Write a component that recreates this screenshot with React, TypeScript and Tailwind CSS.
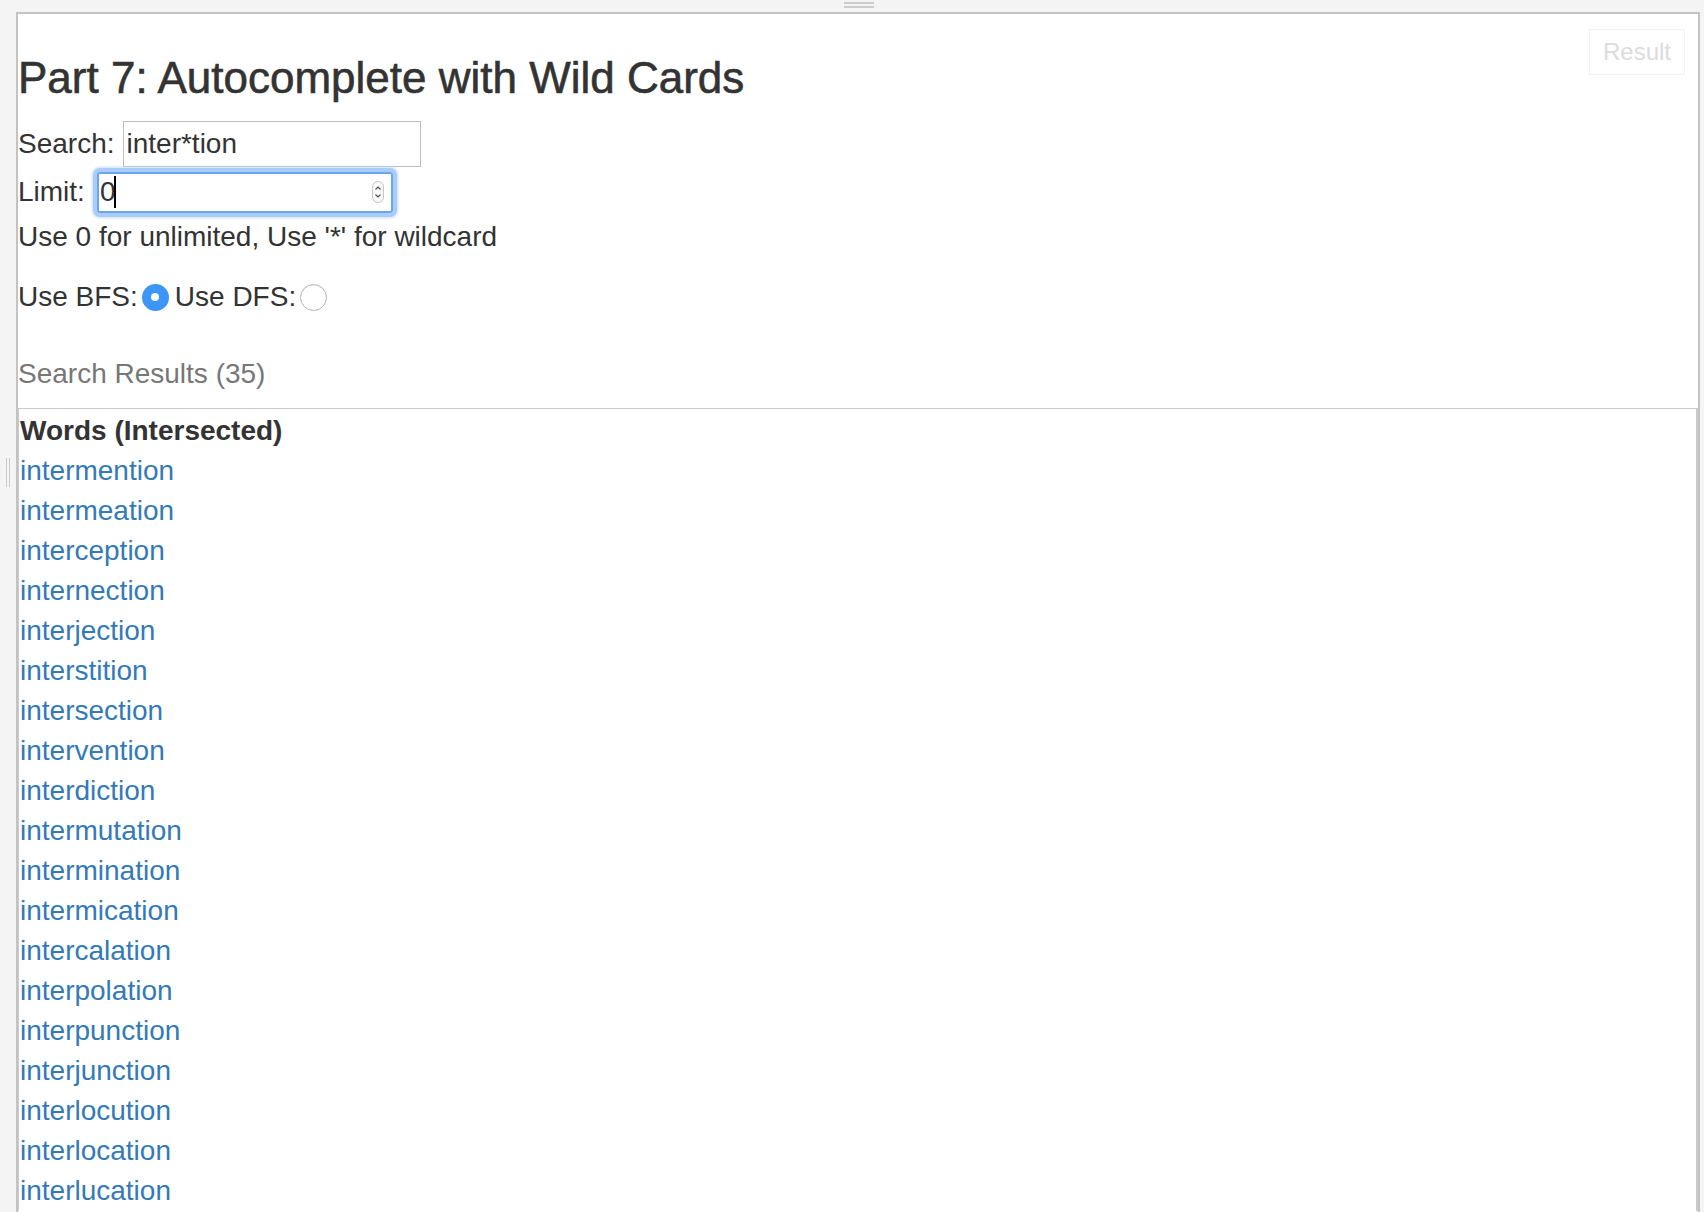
import React from 'react';

// only the rows that fit on screen; the rest of the 35 are below the fold
const words = [
  'intermention',
  'intermeation',
  'interception',
  'internection',
  'interjection',
  'interstition',
  'intersection',
  'intervention',
  'interdiction',
  'intermutation',
  'intermination',
  'intermication',
  'intercalation',
  'interpolation',
  'interpunction',
  'interjunction',
  'interlocution',
  'interlocation',
  'interlucation',
];

const Spinner: React.FC = () => (
  <svg width="12" height="22" viewBox="0 0 12 22" className="shrink-0">
    <rect x="0.5" y="0.5" width="11" height="21" rx="5.5" fill="#fafafa" stroke="#c4c4c4" />
    <path d="M3.5 8.5 L6 6 L8.5 8.5" fill="none" stroke="#4a4a4a" strokeWidth="1.1" />
    <path d="M3.5 13.5 L6 16 L8.5 13.5" fill="none" stroke="#4a4a4a" strokeWidth="1.1" />
  </svg>
);

const Radio: React.FC<{ checked?: boolean }> = ({ checked }) =>
  checked ? (
    <span className="flex h-[27px] w-[27px] shrink-0 items-center justify-center rounded-full bg-[#3b96f5]">
      <span className="h-[8px] w-[8px] rounded-full bg-white" />
    </span>
  ) : (
    <span className="h-[27px] w-[27px] shrink-0 rounded-full border border-[#b3b3b3] bg-white shadow-[inset_0_1px_1px_rgba(0,0,0,0.06)]" />
  );

export default function App() {
  return (
    <div className="relative h-[1212px] w-full overflow-hidden bg-[#f4f4f4] font-['Liberation_Sans',Arial,sans-serif]">
      {/* drag handles of the fiddle panes */}
      <div className="absolute left-[844px] top-[2px] flex w-[30px] flex-col gap-[2px]">
        <span className="h-[2px] bg-[#cdcdcd]" />
        <span className="h-[2px] bg-[#cdcdcd]" />
      </div>
      <div className="absolute left-[6px] top-[458px] flex h-[29px] gap-[2px]">
        <span className="w-[1px] bg-[#cdcdcd]" />
        <span className="w-[1px] bg-[#cdcdcd]" />
      </div>

      <div className="relative ml-[16px] mr-[4px] mt-[12px] h-[1200px] border-x-2 border-t-2 border-[#c3c3c3] bg-white text-[28px] leading-[40px] text-[#333]">
        <div className="absolute right-[13px] top-[15px] border border-[#f2f2f2] px-[13px] py-[6px] text-[24px] leading-[32px] text-[#dcdcdc]">
          Result
        </div>

        <h2 className="mt-[40px] text-[44px] leading-[48px] text-[#333] [-webkit-text-stroke:0.6px_#333]">
          Part 7: Autocomplete with Wild Cards
        </h2>

        <div className="mt-[19px] flex h-[46px] items-center">
          <span>Search:</span>
          <div className="ml-[8px] flex h-[46px] w-[298px] items-center border border-[#bdbdbd] pl-[3px]">inter*tion</div>
        </div>

        <div className="mt-[3px] flex h-[44px] items-center">
          <span>Limit:</span>
          <div className="ml-[12px] flex h-[41px] w-[296px] items-center rounded-[3px] border-2 border-[#6aa6ef] pl-[1px] pr-[7px] shadow-[0_0_0_4px_#a9cdf8,0_0_3px_5px_#c6defb]">
            <span>0</span>
            <span className="ml-[-1px] h-[32px] w-[2px] bg-black" />
            <span className="flex-1" />
            <Spinner />
          </div>
        </div>

        <div className="mt-[3px]">Use 0 for unlimited, Use '*' for wildcard</div>

        <div className="mt-[20px] flex h-[40px] items-center">
          <span>Use BFS:</span>
          <span className="ml-[4px]" />
          <Radio checked />
          <span className="ml-[6px]">Use DFS:</span>
          <span className="ml-[4px]" />
          <Radio />
        </div>

        <div className="mt-[37px] text-[#777]">Search Results (35)</div>

        <div className="mt-[14px] border-l border-r-2 border-t border-[#cacaca] pl-[1px] pt-[2px]">
          <div className="font-bold">Words (Intersected)</div>
          {words.map((w) => (
            <div key={w}>
              <a href="#" className="text-[#337ab7]">
                {w}
              </a>
            </div>
          ))}
        </div>
      </div>
    </div>
  );
}
